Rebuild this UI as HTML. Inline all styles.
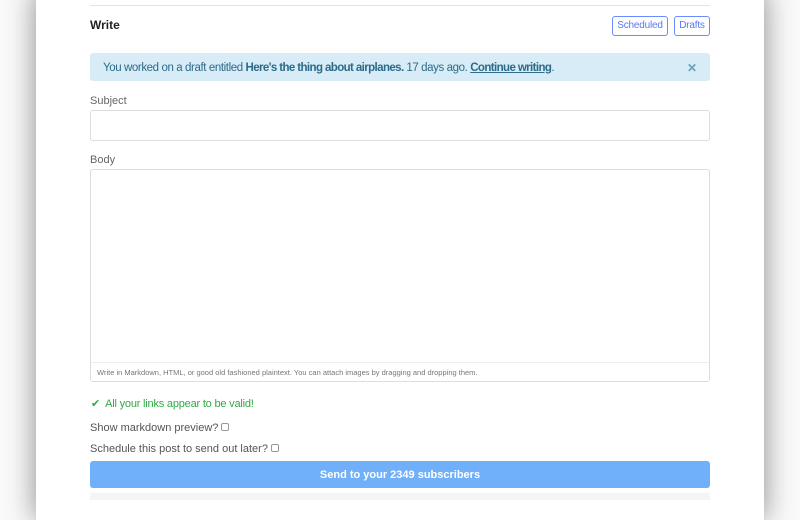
<!DOCTYPE html>
<html><head><style>
body{margin:0;width:800px;height:500px;background:#fafafa;overflow:hidden;font-family:"Liberation Sans",sans-serif;position:relative}
.card{position:absolute;left:36px;top:-10px;width:728px;height:530px;background:#fff;box-shadow:0 0 28px rgba(0,0,0,.45)}
.abs{position:absolute}
.hr{left:90px;top:5px;width:620px;height:1px;background:#e3e3e3}
.btn{border:1px solid #6b8cff;color:#5a78f0;border-radius:3px;font-size:10px;height:18px;line-height:18px;text-align:center;top:16px;letter-spacing:-.2px}
.alert{left:90px;top:53px;width:620px;height:28px;background:#d7ecf6;border-radius:3px;color:#2d6b8a;font-size:11.5px;line-height:30px;letter-spacing:-.4px}
.alert b{letter-spacing:-.6px}
.lbl{color:#666;font-size:11px;left:90px}
.inp{left:90px;width:618px;border:1px solid #ddd;border-radius:3px;background:#fff}
</style></head><body>
<div class="card"></div>
<div class="abs hr"></div>
<div class="abs" style="left:90px;top:18px;font-size:12px;font-weight:bold;color:#222">Write</div>
<div class="abs btn" style="left:612px;width:54px">Scheduled</div>
<div class="abs btn" style="left:674px;width:34px">Drafts</div>
<div class="abs alert"><span style="margin-left:13px">You worked on a draft entitled <b>Here's the thing about airplanes.</b> 17 days ago. <b style="text-decoration:underline">Continue writing</b>.</span><span style="position:absolute;left:597px;font-weight:bold;color:#6aa0bb;font-size:12px">✕</span></div>
<div class="abs lbl" style="top:95px">Subject</div>
<div class="abs inp" style="top:110px;height:29px"></div>
<div class="abs lbl" style="top:154px">Body</div>
<div class="abs inp" style="top:169px;height:211px"><div style="position:absolute;left:0;right:0;bottom:0;height:18px;border-top:1px solid #eee;font-size:7.5px;color:#777;line-height:19px;padding-left:6px">Write in Markdown, HTML, or good old fashioned plaintext. You can attach images by dragging and dropping them.</div></div>
<div class="abs" style="left:91px;top:397px;font-size:11px;color:#2faa45;letter-spacing:-.2px">✔&nbsp; All your links appear to be valid!</div>
<div class="abs" style="left:90px;top:422px;font-size:11px;color:#555">Show markdown preview? <span style="display:inline-block;width:6px;height:6px;border:1px solid #999;border-radius:2px"></span></div>
<div class="abs" style="left:90px;top:443px;font-size:11px;color:#555">Schedule this post to send out later? <span style="display:inline-block;width:6px;height:6px;border:1px solid #999;border-radius:2px"></span></div>
<div class="abs" style="left:90px;top:461px;width:620px;height:27px;background:#70b0fb;border-radius:3px;color:#fff;font-size:11px;font-weight:bold;text-align:center;line-height:28px">Send to your 2349 subscribers</div>
<div class="abs" style="left:90px;top:493px;width:620px;height:7px;background:#f5f5f5"></div>
</body></html>
